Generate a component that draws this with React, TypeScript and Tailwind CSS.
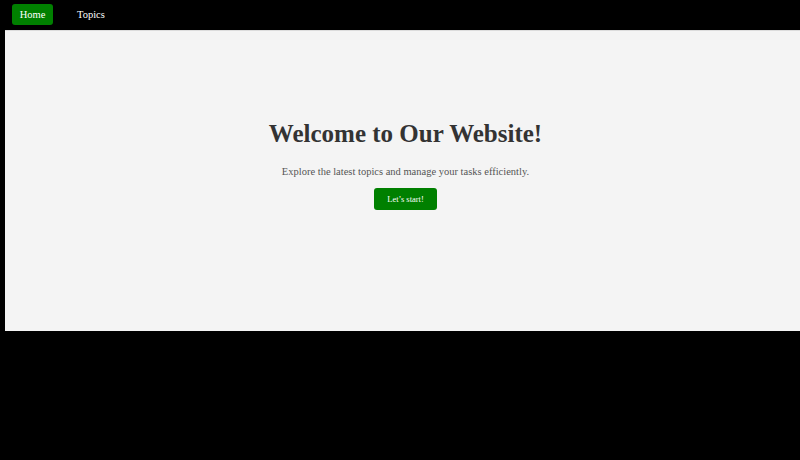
import React from "react";

export default function App() {
  const serif = { fontFamily: '"Liberation Serif", "Times New Roman", serif' };
  return (
    <div className="h-[460px] w-[800px] bg-black" style={serif}>
      <nav className="flex h-[30px] items-start pl-[12px] pt-[4px]">
        <a className="flex h-[21px] w-[41px] items-center justify-center rounded-[3px] bg-[#008000] text-[10.5px] text-white">
          Home
        </a>
        <a className="ml-[24px] flex h-[21px] items-center text-[10.5px] text-white">Topics</a>
      </nav>
      <main className="ml-[5px] flex h-[301px] flex-col items-center border-t border-[#dcdcdc] bg-[#f4f4f4] pl-[6px] pt-[88px]">
        <h1 className="text-[25px] font-bold leading-[30px] text-[#333333]">Welcome to Our Website!</h1>
        <p className="mt-[16px] text-[10.5px] leading-[14px] text-[#555555]">
          Explore the latest topics and manage your tasks efficiently.
        </p>
        <button className="mt-[9px] flex h-[22px] w-[63px] items-center justify-center rounded-[3px] bg-[#008000] text-[8.5px] text-white">
          Let’s start!
        </button>
      </main>
    </div>
  );
}
